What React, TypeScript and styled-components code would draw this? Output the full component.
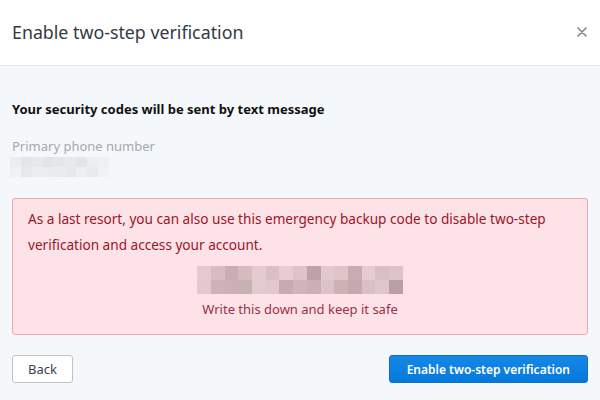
import React from 'react'
import styled, { createGlobalStyle } from 'styled-components'

const GlobalStyle = createGlobalStyle`
  html, body {
    margin: 0;
    padding: 0;
    background: #f5f8fb;
  }
  body {
    font-family: 'Noto Sans', 'Open Sans', sans-serif;
  }
`

const Modal = styled.div`
  width: 600px;
  height: 400px;
  display: flex;
  flex-direction: column;
  background: #f5f8fb;
  overflow: hidden;
`

const Header = styled.header`
  height: 66px;
  box-sizing: border-box;
  display: flex;
  align-items: center;
  justify-content: space-between;
  padding: 0 13px 2px 12px;
  background: #ffffff;
  border-bottom: 1px solid #e3e7ec;
`

const Title = styled.h1`
  margin: 0;
  font-size: 17.8px;
  font-weight: 400;
  color: #333a44;
`

const CloseButton = styled.button`
  border: none;
  background: none;
  padding: 0;
  width: 10px;
  height: 10px;
  display: flex;
  align-items: center;
  justify-content: center;
  cursor: pointer;
`

const Body = styled.main`
  flex: 1;
  display: flex;
  flex-direction: column;
  padding: 34px 12px 0 12px;
`

const Heading = styled.h2`
  margin: 0;
  font-size: 13px;
  font-weight: 700;
  color: #111;
`

const Label = styled.div`
  margin-top: 19px;
  font-size: 13px;
  color: #a3a8ae;
`

const Pixels = styled.div<{ $cols: number; $cell: number; $rowH: number }>`
  display: grid;
  grid-template-columns: repeat(${p => p.$cols}, ${p => p.$cell}px);
  grid-auto-rows: ${p => p.$rowH}px;
`

const PhonePixels = styled(Pixels)`
  margin: 2px 0 0 -2px;
`

const Alert = styled.section`
  margin-top: 21px;
  border: 1px solid #f2a6ae;
  border-radius: 3px;
  background: #fde3e7;
  padding: 7px 15px 16px 15px;
  display: flex;
  flex-direction: column;
  color: #9e1428;
`

const AlertText = styled.p`
  margin: 0;
  font-size: 13.6px;
  line-height: 26px;
`

const CodeBlock = styled.div`
  margin-top: 8px;
  display: flex;
  flex-direction: column;
  align-items: center;
`

const CodeHint = styled.div`
  margin-top: 6px;
  font-size: 13px;
  color: #9c2f45;
`

const Footer = styled.footer`
  margin-top: 20px;
  display: flex;
  justify-content: space-between;
  align-items: center;
`

const Button = styled.button<{ $primary?: boolean }>`
  height: 28px;
  box-sizing: border-box;
  border-radius: 3px;
  font-family: 'Noto Sans', 'Open Sans', sans-serif;
  font-size: ${p => (p.$primary ? '12px' : '13px')};
  cursor: pointer;
  padding: 0 ${p => (p.$primary ? '17px' : '15px')};
  border: 1px solid ${p => (p.$primary ? '#0a72c9' : '#bfc3c8')};
  background: ${p => (p.$primary ? 'linear-gradient(#1688e6, #0479db)' : '#ffffff')};
  color: ${p => (p.$primary ? '#ffffff' : '#3a4250')};
  font-weight: ${p => (p.$primary ? 600 : 400)};
`

const phoneShades = [
  '#ebedf0', '#e2e5e9', '#e6e8ec', '#e1e4e8', '#e4e7ea', '#e7e9ec', '#e2e5e8', '#ebedf0', '#eef0f2',
  '#eff1f3', '#e6e8eb', '#ebedef', '#eaecef', '#e9ebee', '#e6e9ec', '#eceef1', '#e8eaed', '#f0f2f4',
]

const codeShades = [
  '#e6c9ce', '#d9bcc2', '#c9adb4', '#d6babf', '#e3cbd0', '#dac0c4', '#e6cdd1', '#dec3c8', '#bea2a9', '#e2c8cd', '#dfc4c9', '#c8acb2', '#e4ccd1', '#d9bfc4', '#dcc3c7',
  '#e3c9ce', '#cdb2b7', '#cbb1b5', '#c5b2b1', '#e2cbd0', '#e2c8cc', '#c7abb2', '#d0b4b8', '#cbb0b6', '#dcc3c7', '#cdb1b5', '#c5a9ae', '#dbbfc3', '#ddc7cc', '#baa0a6',
]

const PixelGrid = ({ shades, cols, cell, rowH, As = Pixels }: any) => (
  <As $cols={ cols } $cell={ cell } $rowH={ rowH }>
    { shades.map((c: string, i: number) => (
      <div key={ i } style={ { background: c } } />
    )) }
  </As>
)

const CloseIcon = () => (
  <svg width="10" height="10" viewBox="0 0 10 10">
    <path d="M1 1 L9 9 M9 1 L1 9" stroke="#858a91" strokeWidth="1.7" strokeLinecap="round" />
  </svg>
)

export default function App() {
  return (
    <Modal>
      <GlobalStyle />
      <Header>
        <Title>Enable two-step verification</Title>
        <CloseButton aria-label="Close"><CloseIcon /></CloseButton>
      </Header>
      <Body>
        <Heading>Your security codes will be sent by text message</Heading>
        <Label>Primary phone number</Label>
        <PixelGrid shades={ phoneShades } cols={ 9 } cell={ 11 } rowH={ 10 } As={ PhonePixels } />
        <Alert>
          <AlertText>
            As a last resort, you can also use this emergency backup code to disable two-step
            verification and access your account.
          </AlertText>
          <CodeBlock>
            <PixelGrid shades={ codeShades } cols={ 15 } cell={ 13.7 } rowH={ 14 } />
            <CodeHint>Write this down and keep it safe</CodeHint>
          </CodeBlock>
        </Alert>
        <Footer>
          <Button>Back</Button>
          <Button $primary>Enable two-step verification</Button>
        </Footer>
      </Body>
    </Modal>
  )
}
